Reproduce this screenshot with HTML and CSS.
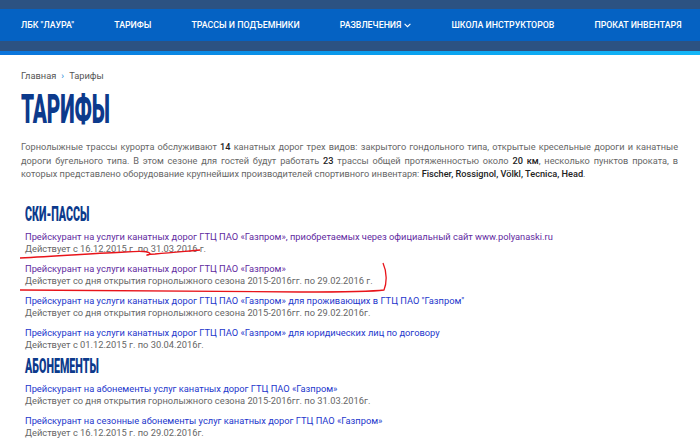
FILE: index.html
```html
<!DOCTYPE html>
<html lang="ru">
<head>
<meta charset="utf-8">
<title>Тарифы</title>
<link rel="stylesheet" href="styles.css">
</head>
<body>
<header class="top">
  <nav class="nav">
    <a class="nav-item" href="#">ЛБК "ЛАУРА"</a>
    <a class="nav-item" href="#">ТАРИФЫ</a>
    <a class="nav-item" href="#">ТРАССЫ И ПОДЪЕМНИКИ</a>
    <a class="nav-item" href="#">РАЗВЛЕЧЕНИЯ <svg class="chev" width="7" height="5" viewBox="0 0 7 5"><path d="M0.6 0.8 L3.5 3.7 L6.4 0.8" fill="none" stroke="#fff" stroke-width="1.1"/></svg></a>
    <a class="nav-item" href="#">ШКОЛА ИНСТРУКТОРОВ</a>
    <a class="nav-item" href="#">ПРОКАТ ИНВЕНТАРЯ</a>
  </nav>
  <div class="stripe"></div>
</header>
<main class="content">
  <div class="crumbs"><a href="#">Главная</a><span class="sep">›</span><span>Тарифы</span></div>
  <h1 class="title"><span class="cond">ТАРИФЫ</span></h1>
  <p class="intro">Горнолыжные трассы курорта обслуживают <b>14</b> канатных дорог трех видов: закрытого гондольного типа, открытые кресельные дороги и канатные дороги бугельного типа. В этом сезоне для гостей будут работать <b>23</b> трассы общей протяженностью около <b>20 км</b>, несколько пунктов проката, в которых представлено оборудование крупнейших производителей спортивного инвентаря: <b>Fischer, Rossignol, Völkl, Tecnica, Head</b>.</p>

  <section class="list">
    <h2 class="sub"><span class="cond">СКИ-ПАССЫ</span></h2>
    <div class="item"><a class="link visited" href="#">Прейскурант на услуги канатных дорог ГТЦ ПАО «Газпром», приобретаемых через официальный сайт www.polyanaski.ru</a><div class="date">Действует с 16.12.2015 г. по 31.03.2016 г.</div></div>
    <div class="item"><a class="link visited" href="#">Прейскурант на услуги канатных дорог ГТЦ ПАО «Газпром»</a><div class="date">Действует со дня открытия горнолыжного сезона 2015-2016гг. по 29.02.2016 г.</div></div>
    <div class="item"><a class="link" href="#">Прейскурант на услуги канатных дорог ГТЦ ПАО «Газпром» для проживающих в ГТЦ ПАО "Газпром"</a><div class="date">Действует со дня открытия горнолыжного сезона 2015-2016гг. по 29.02.2016г.</div></div>
    <div class="item"><a class="link" href="#">Прейскурант на услуги канатных дорог ГТЦ ПАО «Газпром» для юридических лиц по договору</a><div class="date">Действует с 01.12.2015 г. по 30.04.2016г.</div></div>
    <h2 class="sub sub2"><span class="cond">АБОНЕМЕНТЫ</span></h2>
    <div class="item"><a class="link" href="#">Прейскурант на абонементы услуг канатных дорог ГТЦ ПАО «Газпром»</a><div class="date">Действует со дня открытия горнолыжного сезона 2015-2016гг. по 31.03.2016г.</div></div>
    <div class="item"><a class="link" href="#">Прейскурант на сезонные абонементы услуг канатных дорог ГТЦ ПАО «Газпром»</a><div class="date">Действует с 16.12.2015 г. по 29.02.2016г.</div></div>
  </section>
</main>
<svg class="marks" width="700" height="441" viewBox="0 0 700 441">
  <path d="M20 258 C60 256 100 253 125 252 C140 251 150 251 150 254 C150 256 140 255 155 254 C175 252 190 251 200 250" fill="none" stroke="#e8141a" stroke-width="1.3"/>
  <path d="M20 290 C100 291 200 292 300 292 C340 292 370 292 384 290 C387 283 387 272 383 263" fill="none" stroke="#e8141a" stroke-width="1.3"/>
</svg>
</body>
</html>
```
FILE: styles.css
```css
* { box-sizing: border-box; }
html, body { margin: 0; padding: 0; }
body {
  width: 700px;
  height: 441px;
  overflow: hidden;
  background: #fff;
  font-family: Roboto, "Liberation Sans", Arial, sans-serif;
  position: relative;
}
a { text-decoration: none; }
.top { background: #2c5282; padding-top: 9px; }
.nav {
  background: #0562c3;
  height: 32px;
  display: flex;
  align-items: center;
  gap: 40px;
  padding-left: 21px;
}
.nav-item {
  color: #fff;
  font-size: 8.8px;
  font-weight: 500;
  white-space: nowrap;
  display: flex;
  align-items: center;
  gap: 3px;
}
.chev { margin-top: 1px; }
.stripe {
  margin-top: 10px;
  height: 4px;
  background: linear-gradient(90deg, #0b74db 0%, #0aa2ef 60%, #14b6f7 100%);
}
.content { padding: 15px 22px 0 21px; }
.crumbs { font-size: 9.3px; color: #555; display: flex; align-items: center; gap: 5px; }
.crumbs a { color: #555; }
.crumbs .sep { color: #1a7fd6; }
.title { margin: 9px 0 0; height: 40px; line-height: 40px; }
.cond {
  display: inline-block;
  font-family: Roboto, "Liberation Sans", sans-serif;
  font-weight: 900;
  color: #0c3a8c;
  transform: scaleX(0.52);
  transform-origin: left center;
  white-space: nowrap;
}
.title .cond { font-size: 40px; letter-spacing: -0.3px; }
.intro {
  margin: 10px 0 0;
  font-size: 9.2px;
  line-height: 13.5px;
  color: #666;
  text-align: justify;
}
.intro b { color: #222; font-weight: 500; }
.list { padding-left: 4px; margin-top: 24px; font-size: 9.3px; }
.sub { margin: 0; height: 18px; line-height: 18px; }
.sub .cond { font-size: 21px; transform: scaleX(0.51); }
.sub2 { margin-top: 6px; }
.item { margin-top: 8px; line-height: 12px; font-size: 9.3px; }
.link { color: #2336cc; }
.link.visited { color: #5f2aa0; }
.date { color: #666; }
.marks { position: absolute; left: 0; top: 0; pointer-events: none; }
```
